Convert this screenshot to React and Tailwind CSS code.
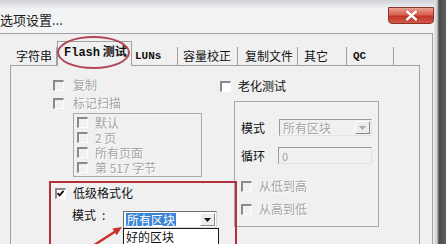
import React from 'react';

// classic win32 check box: dark top/left edge, light bottom/right
const Box = ({ checked = false, enabled = false }) => (
  <span
    className={`relative flex items-center justify-center w-[11px] h-[11px] shrink-0 border-t-2 border-l-2 border-t-[#8a8a8a] border-l-[#8a8a8a] border-b border-r border-b-[#fdfdfd] border-r-[#fdfdfd] ${enabled ? 'bg-white' : 'bg-[#f1f1f1]'}`}
  >
    {checked && (
      <svg width="9" height="9" viewBox="0 0 9 9" className="absolute left-[-1px] top-[-1px]">
        <path d="M1.5 4.2 L3.6 6.4 L7.6 1.8" stroke="#111" strokeWidth="1.8" fill="none" />
      </svg>
    )}
  </span>
);

const Check = ({ label, checked, enabled, gap = 'gap-[9px]', tall = false, className = '' }) => (
  <div className={`flex items-center ${tall ? 'h-[15px]' : 'h-[14px]'} ${gap} ${className}`}>
    <Box checked={checked} enabled={enabled} />
    <span
      className={`text-[12px] whitespace-nowrap ${tall ? 'leading-[15px]' : 'leading-[14px]'} ${
        enabled ? 'text-[#111]' : 'text-[#a4a4a4] [text-shadow:1px_1px_0_#ffffff]'
      }`}
    >
      {label}
    </span>
  </div>
);

const Arrow = ({ disabled }) => (
  <span className="ml-auto mr-[1px] w-[15px] h-[13px] flex items-center justify-center bg-[#ececec] border border-t-white border-l-white border-b-[#8a8a8a] border-r-[#8a8a8a]">
    <svg width="7" height="4" viewBox="0 0 7 4">
      <path d="M0 0 H7 L3.5 4 Z" fill={disabled ? '#a8a8a8' : '#111'} />
    </svg>
  </span>
);

const tabs = [
  { label: '字符串', w: 'w-[47px]', pl: 'pl-[6px]' },
  { label: 'Flash 测试', w: 'w-[75px]', pl: 'pl-[6px]', active: true },
  { label: 'LUNs', w: 'w-[46px]', pl: 'pl-[3px]', mono: true },
  { label: '容量校正', w: 'w-[60px]', pl: 'pl-[5px]' },
  { label: '复制文件', w: 'w-[60px]', pl: 'pl-[7px]' },
  { label: '其它', w: 'w-[49px]', pl: 'pl-[6px]' },
  { label: 'QC', w: 'w-[47px]', pl: 'pl-[6px]', mono: true },
];

export default function App() {
  return (
    <div className="relative w-[446px] h-[244px] overflow-hidden flex bg-[#f0f0f0] font-['Noto_Sans_CJK_SC',sans-serif] text-[#111]">
      {/* window */}
      <div className="w-[434px] flex flex-col">
        {/* title bar */}
        <div className="h-[33px] shrink-0 flex items-start bg-[linear-gradient(to_bottom,#cfd0d3_0px,#e3e5e8_5px,#f1f2f4_9px,#f3f4f6_33px)]">
          <span className="mt-[12px] text-[13px] leading-[16px] text-[#1a1a1a] whitespace-nowrap">选项设置...</span>
          <div className="ml-auto mt-[7px] w-[46px] h-[17px] rounded-b-[4px] border border-[#8c3328] bg-[linear-gradient(to_bottom,#eba195_0%,#d9604f_45%,#c2362a_55%,#d35a46_100%)] flex items-center justify-center">
            <svg width="13" height="11" viewBox="0 0 13 11">
              <path d="M2 1.5 L11 9.5 M11 1.5 L2 9.5" stroke="#5a1a14" strokeWidth="3.4" strokeLinecap="round" opacity="0.5" />
              <path d="M2 1.5 L11 9.5 M11 1.5 L2 9.5" stroke="#ffffff" strokeWidth="2.4" strokeLinecap="round" />
            </svg>
          </div>
        </div>

        {/* client area */}
        <div className="flex-1 w-[433px] flex flex-col border-t border-r border-[#a2a2a2] pl-[10px] pr-[12px]">
          {/* tab strip */}
          <div className="h-[31px] shrink-0 flex items-end">
            {tabs.map((t) => (
              <div
                key={t.label}
                className={`${t.w} ${t.pl} shrink-0 flex items-center whitespace-nowrap border-r border-[#a0a0a0] ${
                  t.active ? 'h-[25px] pb-[5px] border-l border-t bg-[#f0f0f0] -mb-px relative' : 'h-[18px] pb-[1px]'
                }`}
              >
                {t.active ? (
                  <span className="text-[12px] leading-[14px] font-bold">
                    <span className="font-['Liberation_Mono',monospace] text-[12px]">Flash</span>{' '}
                    <span>测试</span>
                  </span>
                ) : (
                  <span
                    className={`leading-[14px] ${
                      t.mono ? "font-['Liberation_Mono',monospace] font-bold text-[11px]" : 'text-[12px]'
                    }`}
                  >
                    {t.label}
                  </span>
                )}
              </div>
            ))}
          </div>

          {/* tab page */}
          <div className="flex-1 flex border-t border-l border-r border-[#a0a0a0]">
            {/* left column */}
            <div className="ml-[42px] w-[167px] shrink-0 flex flex-col">
              <Check label="复制" className="mt-[12px]" />
              <Check label="标记扫描" className="mt-[4px]" />
              <div className="ml-[20px] mt-[3px] w-[129px] h-[64px] shrink-0 border border-[#a9a9a9] pl-[3px] pt-[1px] flex flex-col">
                <Check label="默认" gap="gap-[7px]" tall />
                <Check label="2 页" gap="gap-[7px]" tall />
                <Check label="所有页面" gap="gap-[7px]" tall />
                <Check label="第 517 字节" gap="gap-[7px]" tall />
              </div>
              <Check label="低级格式化" checked enabled gap="gap-[7px]" className="ml-[2px] mt-[9px]" />
              <div className="mt-[7px] ml-[19px] flex items-start text-[12px] leading-[14px]">
                <span className="w-[30px] mt-[1px]">模式</span>
                <span className="w-[21px] mt-[1px]">:</span>
                <div className="relative mt-[4px] w-[94px] h-[17px] flex items-center bg-white border border-t-[#6e6e6e] border-l-[#6e6e6e] border-b-[#d8d8d8] border-r-[#d8d8d8]">
                  <span className="ml-[2px] px-[1px] bg-[#3c84d6] text-white leading-[13px]">所有区块</span>
                  <Arrow />
                  <div className="absolute left-[-1px] top-[16px] w-[96px] h-[22px] bg-white border border-[#1a1a1a] pl-[2px] leading-[16px]">
                    好的区块
                  </div>
                </div>
              </div>
            </div>

            {/* right column */}
            <div className="flex flex-col">
              <Check label="老化测试" enabled gap="gap-[7px]" className="mt-[13px]" />
              <div className="ml-[14px] mt-[8px] w-[145px] h-[126px] border border-[#a9a9a9] pl-[6px] pt-[17px] flex flex-col text-[12px] leading-[14px]">
                <div className="flex items-center h-[17px]">
                  <span className="w-[38px]">模式</span>
                  <div className="w-[93px] h-[17px] flex items-center bg-[#f0f0f0] border border-t-[#9a9a9a] border-l-[#9a9a9a] border-b-[#e2e2e2] border-r-[#e2e2e2]">
                    <span className="ml-[3px] text-[#a4a4a4] [text-shadow:1px_1px_0_#ffffff]">所有区块</span>
                    <Arrow disabled />
                  </div>
                </div>
                <div className="flex items-center h-[17px] mt-[11px]">
                  <span className="w-[37px]">循环</span>
                  <div className="w-[94px] h-[17px] flex items-center bg-[#f0f0f0] border border-t-[#9a9a9a] border-l-[#9a9a9a] border-b-[#e2e2e2] border-r-[#e2e2e2]">
                    <span className="ml-[3px] text-[11px] text-[#a4a4a4]">0</span>
                  </div>
                </div>
                <Check label="从低到高" gap="gap-[7px]" className="mt-[15px]" />
                <Check label="从高到低" gap="gap-[7px]" className="mt-[9px]" />
              </div>
            </div>
          </div>
        </div>
      </div>

      {/* right window frame */}
      <div className="w-[12px] bg-[linear-gradient(to_right,#e4e4e4_0px,#cfcfcf_3px,#4c4c4c_5px,#5e5e5e_12px)]" />

      {/* annotations */}
      <div className="absolute left-[57px] top-[36px] w-[73px] h-[33px] rounded-[50%] border-2 border-[#b34656] pointer-events-none" />
      <div className="absolute left-[49px] top-[181px] w-[188px] h-[80px] border-2 border-[#b2333f] pointer-events-none" />
      <svg className="absolute left-0 top-0 pointer-events-none" width="446" height="244" viewBox="0 0 446 244">
        <line x1="88" y1="249" x2="116" y2="231" stroke="#c8302c" strokeWidth="2.4" />
        <polygon points="122,227 116.7,235.2 112.3,228.6" fill="#c8302c" />
      </svg>
    </div>
  );
}
